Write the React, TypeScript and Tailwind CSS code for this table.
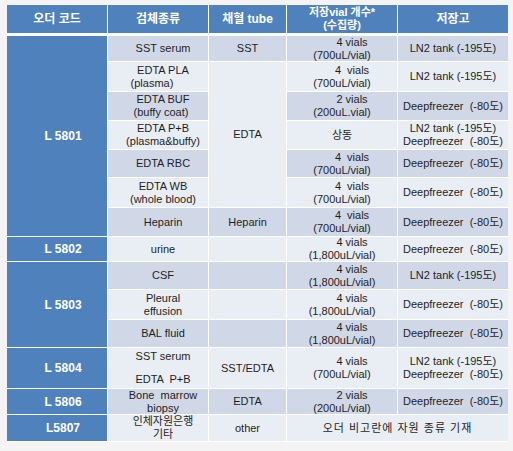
import React from 'react';

const dark = 'bg-[#d0d8e8]';
const light = 'bg-[#e9edf4]';

function Cell({
  tone,
  className = '',
  children,
}: {
  tone: string;
  className?: string;
  children?: React.ReactNode;
}) {
  return (
    <div
      className={`flex flex-col items-center justify-center text-center text-[11px] leading-[13px] text-[#1e1e1e] ${tone} ${className}`}
    >
      {children}
    </div>
  );
}

function Code({ children, className = '' }: { children: React.ReactNode; className?: string }) {
  return (
    <div
      className={`flex items-center justify-center bg-[#4f81bd] pl-3 text-[12px] font-bold text-white ${className}`}
    >
      {children}
    </div>
  );
}

function Vials({ n, amount }: { n: string; amount: string }) {
  return (
    <>
      <span className="whitespace-pre pl-5">{n}</span>
      <span>{amount}</span>
    </>
  );
}

function Spec({ children }: { children: React.ReactNode }) {
  return <span className="whitespace-pre pl-[10px]">{children}</span>;
}

const LN2 = 'LN2 tank (-195도)';
const DEEP = 'Deepfreezer  (-80도)';

export default function App() {
  return (
    <div
      className="h-[451px] w-[513px] bg-[#f4f4f4] pl-[7px] pt-[5px]"
      style={{ fontFamily: '"Liberation Sans", "Noto Sans CJK KR", sans-serif' }}
    >
      <div className="w-[501px] bg-white pb-px">
        {/* header */}
        <div className="grid h-[28px] grid-cols-[100px_100px_77px_110px_110px] gap-x-px text-[12px] font-bold text-white">
          <div className="flex items-center justify-center bg-[#4f81bd]">오더 코드</div>
          <div className="flex items-center justify-center bg-[#4f81bd]">검체종류</div>
          <div className="flex items-center justify-center bg-[#4f81bd]">채혈 tube</div>
          <div className="flex flex-col items-center justify-center bg-[#4f81bd] text-[11px] leading-[13px]">
            <span>저장vial 개수*</span>
            <span>(수집량)</span>
          </div>
          <div className="flex items-center justify-center bg-[#4f81bd]">저장고</div>
        </div>

        {/* body */}
        <div className="mt-[3px] grid grid-cols-[100px_100px_77px_110px_110px] grid-rows-[25px_29px_28px_28px_27px_29px_28px_24px_27px_29px_27px_40px_25px_26px] gap-px">
          {/* r1 */}
          <Code className="row-span-7">L 5801</Code>
          <Cell tone={dark}><Spec>SST serum</Spec></Cell>
          <Cell tone={dark}>SST</Cell>
          <Cell tone={dark}><Vials n="4 vials" amount="(700uL/vial)" /></Cell>
          <Cell tone={dark}>{LN2}</Cell>

          {/* r2 */}
          <Cell tone={light}>
            <Spec>EDTA PLA</Spec>
            <span className="mr-3">(plasma)</span>
          </Cell>
          <Cell tone={light} className="row-span-5">EDTA</Cell>
          <Cell tone={light}><Vials n="4  vials" amount="(700uL/vial)" /></Cell>
          <Cell tone={light}>{LN2}</Cell>

          {/* r3 */}
          <Cell tone={dark}>
            <Spec>EDTA BUF</Spec>
            <span className="pl-[6px]">(buffy coat)</span>
          </Cell>
          <Cell tone={dark}><Vials n="2 vials" amount="(200uL.vial)" /></Cell>
          <Cell tone={dark} className="whitespace-pre">{DEEP}</Cell>

          {/* r4 */}
          <Cell tone={light}>
            <Spec>EDTA P+B</Spec>
            <Spec>(plasma&amp;buffy)</Spec>
          </Cell>
          <Cell tone={light}>상동</Cell>
          <Cell tone={light}>
            <span>{LN2}</span>
            <span className="whitespace-pre">{DEEP}</span>
          </Cell>

          {/* r5 */}
          <Cell tone={dark}><Spec>EDTA RBC</Spec></Cell>
          <Cell tone={dark}><Vials n="4  vials" amount="(700uL/vial)" /></Cell>
          <Cell tone={dark} className="whitespace-pre">{DEEP}</Cell>

          {/* r6 */}
          <Cell tone={light}>
            <Spec>EDTA WB</Spec>
            <Spec>(whole blood)</Spec>
          </Cell>
          <Cell tone={light}><Vials n="4  vials" amount="(700uL/vial)" /></Cell>
          <Cell tone={light} className="whitespace-pre">{DEEP}</Cell>

          {/* r7 */}
          <Cell tone={dark}><Spec>Heparin</Spec></Cell>
          <Cell tone={dark}>Heparin</Cell>
          <Cell tone={dark}><Vials n="4  vials" amount="(700uL/vial)" /></Cell>
          <Cell tone={dark} className="whitespace-pre">{DEEP}</Cell>

          {/* r8 */}
          <Code>L 5802</Code>
          <Cell tone={light}><Spec>urine</Spec></Cell>
          <Cell tone={light} />
          <Cell tone={light}><Vials n="4 vials" amount="(1,800uL/vial)" /></Cell>
          <Cell tone={light} className="whitespace-pre">{DEEP}</Cell>

          {/* r9 */}
          <Code className="row-span-3">L 5803</Code>
          <Cell tone={dark}><Spec>CSF</Spec></Cell>
          <Cell tone={dark} />
          <Cell tone={dark}><Vials n="4 vials" amount="(1,800uL/vial)" /></Cell>
          <Cell tone={dark}>{LN2}</Cell>

          {/* r10 */}
          <Cell tone={light}>
            <Spec>Pleural</Spec>
            <Spec>effusion</Spec>
          </Cell>
          <Cell tone={light} />
          <Cell tone={light}><Vials n="4 vials" amount="(1,800uL/vial)" /></Cell>
          <Cell tone={light} className="whitespace-pre">{DEEP}</Cell>

          {/* r11 */}
          <Cell tone={dark}><Spec>BAL fluid</Spec></Cell>
          <Cell tone={dark} />
          <Cell tone={dark}><Vials n="4 vials" amount="(1,800uL/vial)" /></Cell>
          <Cell tone={dark} className="whitespace-pre">{DEEP}</Cell>

          {/* r12 */}
          <Code>L 5804</Code>
          <Cell tone={light} className="gap-[10px]">
            <Spec>SST serum</Spec>
            <Spec>EDTA  P+B</Spec>
          </Cell>
          <Cell tone={light}>SST/EDTA</Cell>
          <Cell tone={light}><Vials n="4 vials" amount="(700uL/vial)" /></Cell>
          <Cell tone={light}>
            <span>{LN2}</span>
            <span className="whitespace-pre">{DEEP}</span>
          </Cell>

          {/* r13 */}
          <Code>L 5806</Code>
          <Cell tone={dark} className="leading-[12.5px]">
            <Spec>Bone  marrow</Spec>
            <Spec>biopsy</Spec>
          </Cell>
          <Cell tone={dark}>EDTA</Cell>
          <Cell tone={dark} className="leading-[12.5px]"><Vials n="2 vials" amount="(200uL/vial)" /></Cell>
          <Cell tone={dark} className="whitespace-pre">{DEEP}</Cell>

          {/* r14 */}
          <Code>L5807</Code>
          <Cell tone={light} className="leading-[12.5px]">
            <Spec>인체자원은행</Spec>
            <Spec>기타</Spec>
          </Cell>
          <Cell tone={light}>other</Cell>
          <Cell tone={light} className="col-span-2 tracking-[1px]">오더 비고란에 자원 종류 기재</Cell>
        </div>
      </div>
    </div>
  );
}
